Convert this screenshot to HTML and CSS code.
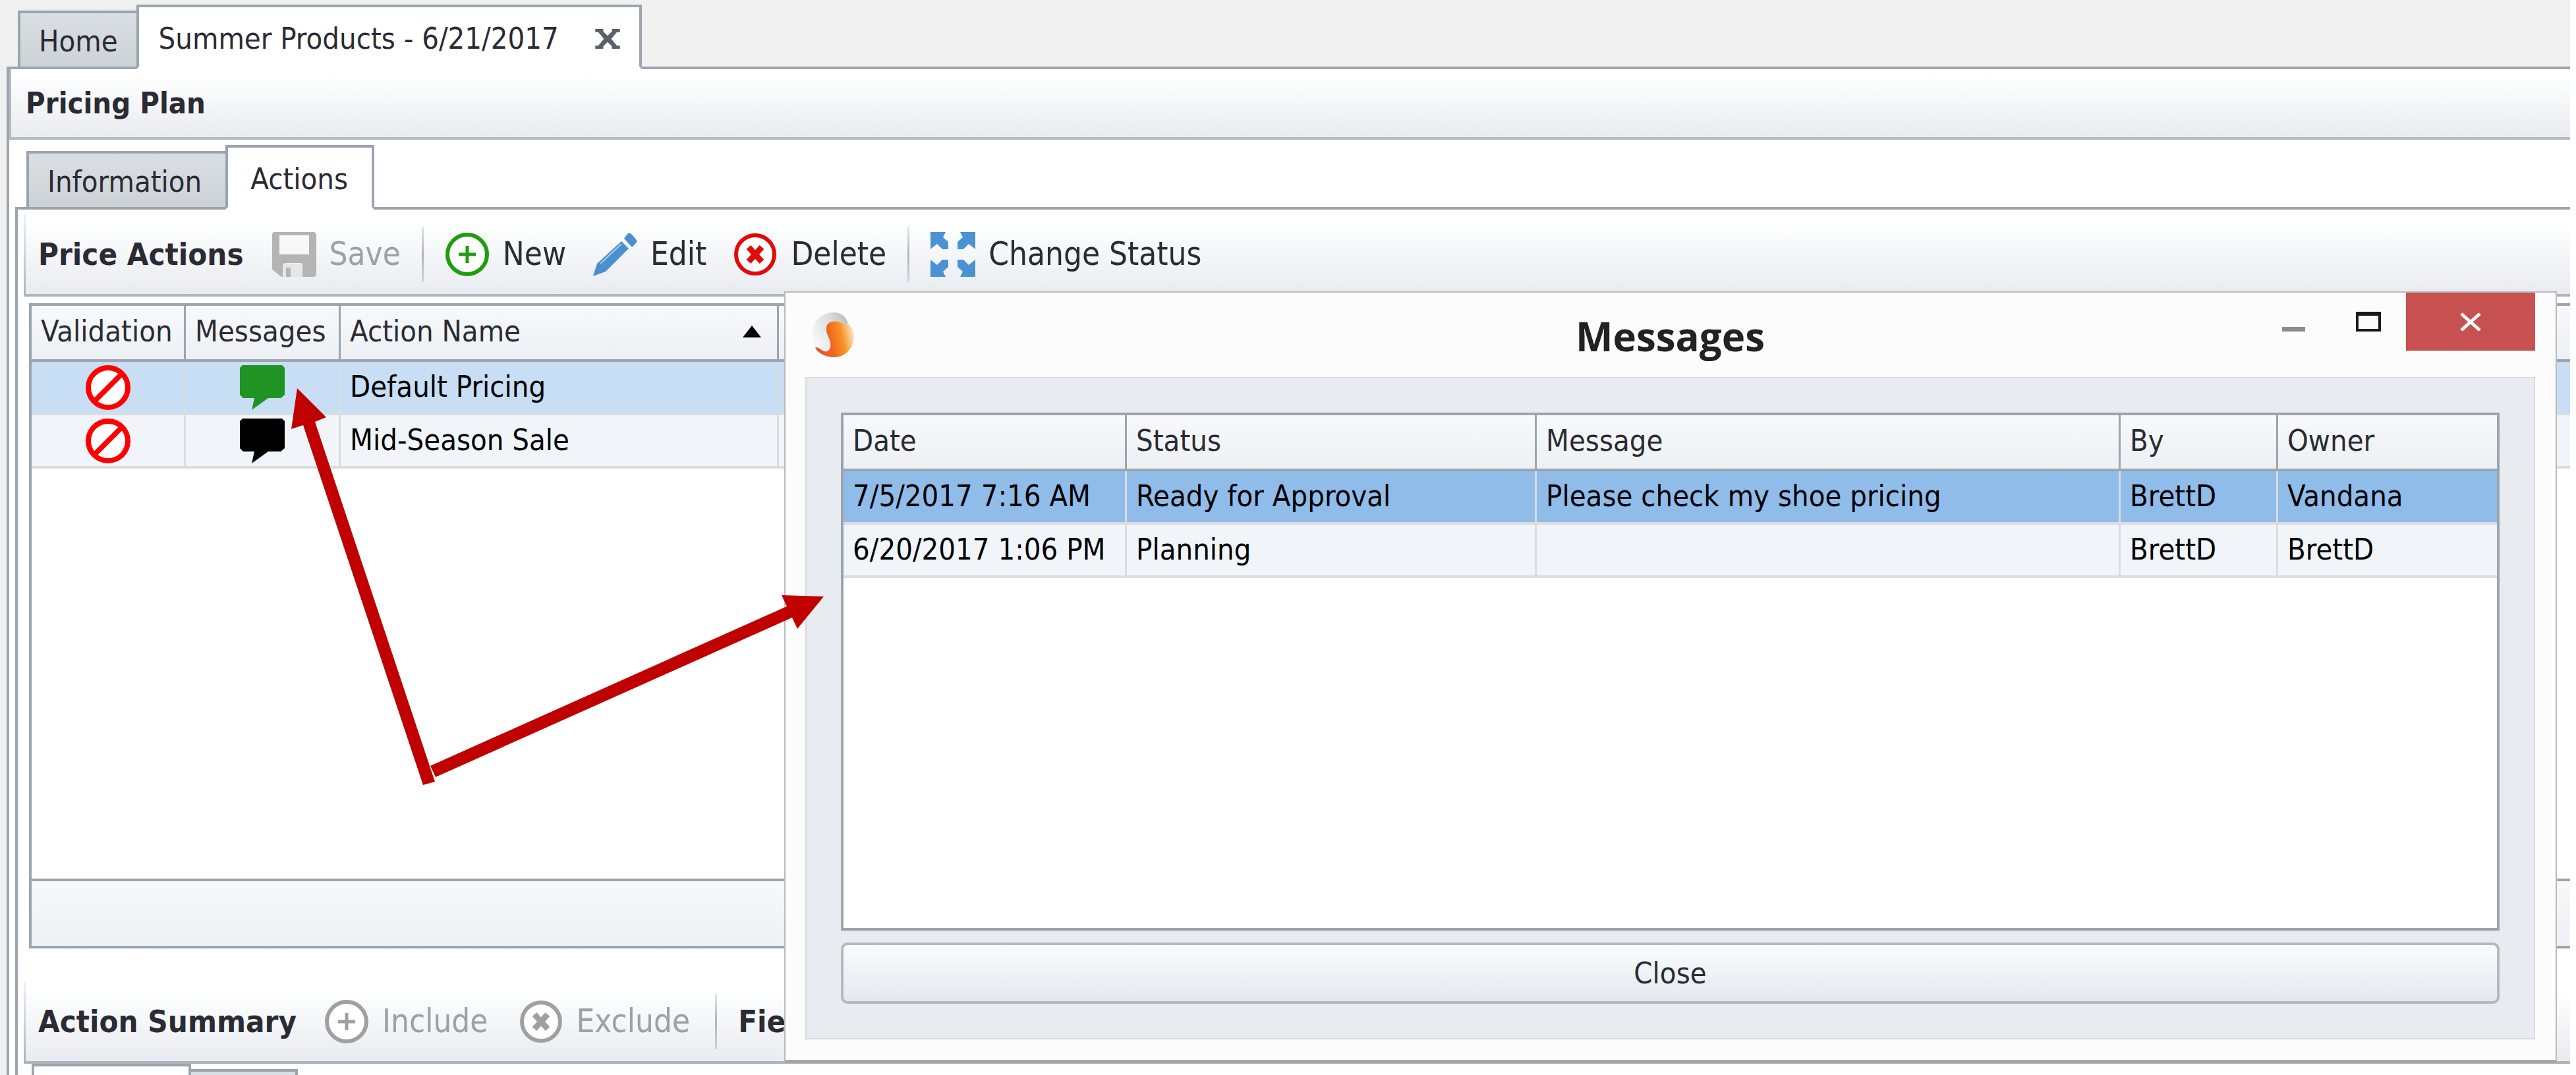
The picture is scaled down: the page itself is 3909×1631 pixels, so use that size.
FILE: index.html
```html
<!DOCTYPE html>
<html lang="en">
<head>
<meta charset="utf-8">
<title>Summer Products - 6/21/2017</title>
<link rel="stylesheet" href="styles.css">
</head>
<body>
<svg class="sprite" aria-hidden="true">
  <defs>
    <linearGradient id="silver" x1="0" y1=".6" x2="1" y2="0"><stop offset="0" stop-color="#f6f7f7"/><stop offset=".5" stop-color="#dfe1e2"/><stop offset="1" stop-color="#b4b8ba"/></linearGradient>
    <linearGradient id="ember" x1="0" y1=".6" x2="1" y2=".4"><stop offset="0" stop-color="#e8502a"/><stop offset=".4" stop-color="#f0661f"/><stop offset=".7" stop-color="#f79428"/><stop offset="1" stop-color="#fde3c4"/></linearGradient>
  </defs>
  <symbol id="i-save" viewBox="0 0 68 68"><path fill="#b4b4b4" d="M3 0h62l3 3v62l-3 3H47V50q0-3-3-3H22q-3 0-3 3v18h-4L1 57V3z"/><path fill="#f8f8f8" d="M12 5h45v29H12z"/><path fill="#e6e6e6" d="M17 48h29v20H17z"/><path fill="#b4b4b4" d="M22 54h7v14h-7z"/></symbol>
  <symbol id="i-plus" viewBox="0 0 68 68"><circle cx="34" cy="34" r="30" fill="#fff" stroke="currentColor" stroke-width="6"/><path d="M34 21v26M21 34h26" stroke="currentColor" stroke-width="5"/></symbol>
  <symbol id="i-cross" viewBox="0 0 68 68"><circle cx="34" cy="34" r="29" fill="#fff" stroke="currentColor" stroke-width="6"/><path d="M24 23l20 22M44 23L24 45" stroke="currentColor" stroke-width="9"/></symbol>
  <symbol id="i-pencil" viewBox="0 0 68 68"><path fill="#4a90d0" d="M1 67L7 48 44 14 55 25 20 60z"/><path fill="#4a90d0" d="M48 10l5-7q3-3 6 0l7 8q3 3 0 6l-6 6z"/><path d="M12 48L44 18" stroke="#a9cbea" stroke-width="2"/></symbol>
  <symbol id="i-arrows" viewBox="0 0 68 68"><g fill="#4a92d2"><path id="corner" d="M0 0h23l-4 8 8 7v11h-9l-8-8-10 8z"/><use href="#corner" transform="matrix(-1 0 0 1 68 0)"/><use href="#corner" transform="matrix(1 0 0 -1 0 68)"/><use href="#corner" transform="matrix(-1 0 0 -1 68 68)"/></g></symbol>
  <symbol id="i-ban" viewBox="0 0 68 68"><circle cx="34" cy="34" r="30" fill="#fff" stroke="#f00" stroke-width="8"/><path d="M14 54L54 14" stroke="#f00" stroke-width="8"/></symbol>
  <symbol id="i-chat" viewBox="0 0 68 68"><path fill="currentColor" d="M4 0h60l4 4v41l-6 5H43L18 68l4-18H5l-5-5V4z"/></symbol>
</svg>

<div class="app">
  <nav class="tabs" aria-label="Documents">
    <button class="tab">Home</button>
    <button class="tab tab-on tab-doc">Summer Products - 6/21/2017
      <svg class="tab-close" viewBox="0 0 40 32"><path d="M0 0h13v4l7 7 7-7V0h13v5h-5l-9 11 9 11h5v5H27v-4l-7-7-7 7v4H0v-5h5l9-11L5 5H0z" fill="#5a6066"/></svg>
    </button>
  </nav>
  <main class="panel">
    <h1 class="plan">Pricing Plan</h1>
    <div class="inner">
      <nav class="tabs" aria-label="Plan sections">
        <button class="tab">Information</button>
        <button class="tab tab-on">Actions</button>
      </nav>
      <section class="panel panel-sub">
        <div class="bar">
          <h2>Price Actions</h2>
          <button class="tool" disabled><svg><use href="#i-save"/></svg>Save</button>
          <i class="sep"></i>
          <button class="tool"><svg class="green"><use href="#i-plus"/></svg>New</button>
          <button class="tool"><svg><use href="#i-pencil"/></svg>Edit</button>
          <button class="tool"><svg class="red"><use href="#i-cross"/></svg>Delete</button>
          <i class="sep"></i>
          <button class="tool"><svg><use href="#i-arrows"/></svg>Change Status</button>
        </div>
        <div class="grid grid-actions">
          <table>
            <colgroup><col class="c-valid"><col class="c-msgs"><col class="c-name"><col></colgroup>
            <thead><tr><th>Validation</th><th>Messages</th><th><span class="sorted">Action Name<svg class="sort" viewBox="0 0 28 18"><path d="M14 0l14 18H0z"/></svg></span></th><th></th></tr></thead>
            <tbody>
              <tr class="hot"><td class="mid"><svg><use href="#i-ban"/></svg></td><td class="mid"><svg class="leaf"><use href="#i-chat"/></svg></td><td>Default Pricing</td><td></td></tr>
              <tr><td class="mid"><svg><use href="#i-ban"/></svg></td><td class="mid"><svg><use href="#i-chat"/></svg></td><td>Mid-Season Sale</td><td></td></tr>
            </tbody>
          </table>
          <div class="grid-foot"></div>
        </div>
        <div class="bar bar-low">
          <h2>Action Summary</h2>
          <button class="tool" disabled><svg><use href="#i-plus"/></svg>Include</button>
          <button class="tool" disabled><svg><use href="#i-cross"/></svg>Exclude</button>
          <i class="sep"></i>
          <h2>Fie</h2>
        </div>
        <div class="stubs"><span class="stub stub-on"></span><span class="stub"></span></div>
      </section>
    </div>
  </main>
</div>

<div class="dialog" role="dialog" aria-labelledby="dlg">
  <header class="title">
    <svg class="logo" viewBox="0 0 68 70"><path fill="url(#silver)" d="M2 36C2 16 16 1 35 1 46 1 54 6 57 18L36 24 34 56C26 64 14 60 8 54 4 48 2 42 2 36z"/><path fill="url(#ember)" d="M24 24C24 16 34 13 42 15 48 17 53 19 57 18 63 24 66 31 66 38 65 56 52 69 36 69 22 69 10 62 7 54 14 53 18 62 25 60 30 58 31 52 30 46 28 38 23 33 24 24z"/></svg>
    <h2 id="dlg">Messages</h2>
    <div class="controls">
      <button aria-label="Minimize"><svg viewBox="0 0 40 30"><path fill="#8c8c8c" d="M3 23h35v7H3z"/></svg></button>
      <button aria-label="Maximize"><svg viewBox="0 0 40 30"><path fill="#1a1a1a" fill-rule="evenodd" d="M1 0h38v30H1zM5 6v20h30V6z"/></svg></button>
      <button class="kill" aria-label="Close window"><svg viewBox="0 0 40 30"><path d="M6 3l28 25M34 3L6 28" stroke="#fff" stroke-width="5"/></svg></button>
    </div>
  </header>
  <div class="body">
    <div class="grid grid-msgs">
      <table>
        <colgroup><col class="c-date"><col class="c-status"><col><col class="c-by"><col class="c-owner"></colgroup>
        <thead><tr><th>Date</th><th>Status</th><th>Message</th><th>By</th><th>Owner</th></tr></thead>
        <tbody>
          <tr class="picked"><td>7/5/2017 7:16 AM</td><td>Ready for Approval</td><td>Please check my shoe pricing</td><td>BrettD</td><td>Vandana</td></tr>
          <tr><td>6/20/2017 1:06 PM</td><td>Planning</td><td></td><td>BrettD</td><td>BrettD</td></tr>
        </tbody>
      </table>
    </div>
    <button class="close">Close</button>
  </div>
</div>

<svg class="pointer" viewBox="442 589 808 602" aria-hidden="true"><path fill="#c00000" d="M451 589l44 44-17 7 182 546-18 5-182-546-18 6zM1250 905l-40 49-8-17-541 242-8-17 541-242-8-17z"/></svg>
</body>
</html>
```
FILE: styles.css
```css
* { box-sizing: border-box; }
:root { --line: #9ba5af; --ink: #2b2b33; }
body {
  margin: 0;
  position: relative;
  height: 100vh;
  overflow: hidden;
  background: #f0f0f0;
  color: var(--ink);
  font: 45px/56px "DejaVu Sans Condensed", "DejaVu Sans", sans-serif;
}
button { font: inherit; color: inherit; border: 0; background: none; padding: 0; }
h1, h2 { margin: 0; font-weight: bold; }
h1 { font-size: 45px; }
h2 { font-size: 47px; }
svg { display: block; flex: none; }
.sprite { position: absolute; width: 0; height: 0; }

.app { display: flex; flex-direction: column; height: 100%; padding: 7px 0 0 10px; border-right: 9px solid #fff; }
.tabs { display: flex; align-items: flex-end; padding-left: 17px; margin-bottom: -4px; position: relative; z-index: 1; }
.tab {
  height: 89px;
  padding: 4px 28px 0;
  border: 4px solid var(--line);
  background: linear-gradient(#dadfe4, #cdd2d7);
}
.inner .tab { padding-right: 36px; }
.tab-on { height: 98px; margin-left: -4px; padding: 6px 36px 0 34px; border-bottom-color: #fff; background: #fff; }
.tab-doc { display: flex; align-items: center; gap: 54px; padding-right: 28px; padding-left: 30px; }
.tab-close { width: 40px; height: 30px; }

.panel { flex: 1; min-height: 0; display: flex; flex-direction: column; background: #fff; border: solid var(--line); border-width: 4px 0 0 4px; }
.plan {
  height: 107px;
  padding: 24px 22px 0;
  border: solid #b4bac0;
  border-width: 0 0 4px 3px;
  background: linear-gradient(#fff 10%, #e8ebf0);
}
.inner { flex: 1; min-height: 0; display: flex; flex-direction: column; padding: 8px 0 0 9px; }
.panel-sub { padding-left: 9px; }

.bar {
  display: flex;
  align-items: center;
  height: 125px;
  margin-top: 7px;
  padding: 0 22px;
  border-bottom: 4px solid #aeb4ba;
  background:
    linear-gradient(#eef0f2, #aeb4ba) left / 3px 100% no-repeat,
    linear-gradient(#fff, #fff 10%, #e8ebf0);
  white-space: nowrap;
}
.bar h2 { margin-right: 42px; }
.tool { display: flex; align-items: center; gap: 20px; margin-right: 40px; font-size: 49px; }
.tool svg, .mid svg { width: 68px; height: 68px; }
.tool:disabled { color: #a0a0a4; }
.green { color: #1f9c0f; }
.red { color: #e20a0a; }
.leaf { color: #1f9424; }
.sep { width: 3px; height: 84px; margin: 0 32px 0 -8px; background: linear-gradient(#e4e6e8, #b0b4b8 50%, #d0d4d8); }

.grid { display: flex; flex-direction: column; background: #fff; border: 4px solid var(--line); }
.grid-actions { flex: 1; margin: 10px 0 0 8px; border-right: 0; }
table { width: 100%; table-layout: fixed; border-collapse: separate; border-spacing: 0; color: #000; }
th, td { padding: 0 0 2px 14px; text-align: left; white-space: nowrap; }
th { height: 85px; padding-bottom: 4px; color: var(--ink); font-weight: normal; border: solid var(--line); border-width: 0 3px 4px 0; background: linear-gradient(#f7f9fb, #edf0f4); }
td { height: 81px; border: solid #d9dde1; border-width: 0 3px 4px 0; background: #f1f5fa; }
th:last-child, td:last-child { border-right: 0; }
.hot td { background: #c8def5; }
.picked td { background: #90bcea; }
.mid { padding: 0; }
.mid svg { margin: auto; }
.sorted { display: flex; align-items: center; justify-content: space-between; padding-right: 24px; }
.sort { width: 28px; height: 18px; }
.c-valid { width: 234px; }
.c-msgs { width: 235px; }
.c-name { width: 665px; }
.grid-foot { height: 102px; margin-top: auto; border-top: 4px solid var(--line); background: linear-gradient(#f7f8fa, #eef1f5); }
.bar-low { margin-top: 50px; }
.bar-low .tool { margin-right: 46px; }
.stubs { display: flex; align-items: flex-start; height: 17px; margin-left: 12px; }
.stub { width: 162px; height: 9px; margin-top: 8px; border: solid var(--line); border-width: 4px 4px 0 0; background: #dadfe4; }
.stub-on { width: 242px; height: 17px; margin-top: 0; border-width: 4px 4px 0; background: #fff; }

.dialog {
  position: absolute;
  inset: 442px 29px 18px 1190px;
  display: flex;
  flex-direction: column;
  padding: 0 31px 31px 30px;
  border: 2px solid #b8babc;
  border-bottom: 5px solid #a3a8ac;
  background: #fcfcfc;
}
.title { display: grid; grid-template-columns: 1fr auto 1fr; height: 128px; }
.title h2 { align-self: center; padding-top: 4px; color: #222; font: bold 60px/80px "Open Sans", sans-serif; }
.logo { width: 68px; height: 70px; margin: 29px 0 0 8px; }
.controls { display: flex; justify-content: flex-end; align-items: flex-start; }
.controls button { display: grid; place-content: center; width: 114px; height: 88px; }
.controls svg { width: 40px; height: 30px; }
.controls .kill { width: 196px; background: #c75050; }
.body { flex: 1; display: flex; flex-direction: column; gap: 18px; padding: 52px; border: 2px solid #d8dadc; background: #e8ecf1; }
.grid-msgs { flex: 1; }
.c-date { width: 430px; }
.c-status { width: 622px; }
.c-by { width: 239px; }
.c-owner { width: 332px; }
.close { height: 93px; border: 4px solid #b4b9be; border-radius: 10px; background: linear-gradient(#f8fcff, #e5e9ed); }

.pointer { position: absolute; left: 442px; top: 589px; width: 808px; height: 602px; }
```
